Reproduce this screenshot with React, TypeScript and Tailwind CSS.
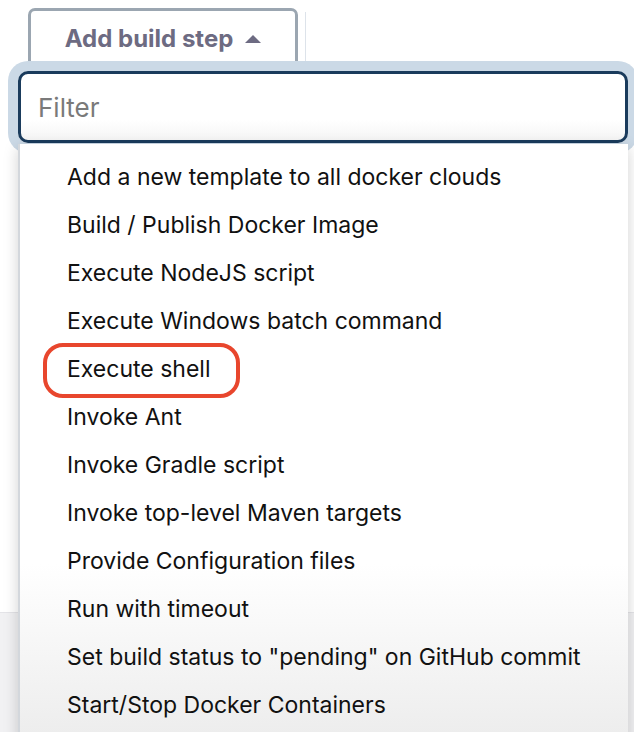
import React from "react";

const items = [
  "Add a new template to all docker clouds",
  "Build / Publish Docker Image",
  "Execute NodeJS script",
  "Execute Windows batch command",
  "Execute shell",
  "Invoke Ant",
  "Invoke Gradle script",
  "Invoke top-level Maven targets",
  "Provide Configuration files",
  "Run with timeout",
  'Set build status to "pending" on GitHub commit',
  "Start/Stop Docker Containers",
];

export default function App() {
  return (
    <div
      className="relative w-[634px] h-[732px] overflow-hidden bg-white"
      style={{ fontFamily: "Inter, 'Noto Sans', sans-serif" }}
    >
      {/* background page */}
      <div className="flex flex-col h-full">
        <div className="h-[612px] bg-white" />
        <div className="flex-1 bg-[#f1f1f3] border-t border-[#e4e4e8]" />
      </div>

      {/* button row */}
      <div className="absolute left-0 top-0 flex items-start">
        <button className="ml-[28px] mt-[8px] w-[270px] h-[61px] border-[3px] border-[#9ba6b1] rounded-[7px] bg-white flex items-center justify-center gap-[12px] text-[24px] font-bold text-[#6d6b82]">
          <span>Add build step</span>
          <svg width="16" height="8" viewBox="0 0 16 8">
            <path d="M0 8 L8 0 L16 8 Z" fill="#6d6b82" />
          </svg>
        </button>
        <div className="ml-[7px] mt-[12px] w-px h-[50px] bg-[#dde3ea]" />
      </div>

      {/* filter + menu overlay */}
      <div className="absolute left-[18px] top-[71px] w-[610px]">
        <div className="h-[72px] rounded-[10px] border-[3px] border-[#1a3b5c] bg-gradient-to-b from-white from-70% to-[#f5f5f5] shadow-[0_0_0_10px_#cbd9e6] flex items-center pl-[17px]">
          <span className="text-[26px] text-[#7a7a7a]">Filter</span>
        </div>
        <div className="mt-px h-[600px] bg-gradient-to-b from-white from-70% to-[#ececec] border-l-2 border-[#d3d7dc] shadow-[0_4px_14px_rgba(0,0,0,0.18)] pt-[9px]">
          {items.map((t) => (
            <div key={t} className="h-[48px] flex items-center pl-[47px] text-[23px] text-[#111]">
              {t}
            </div>
          ))}
        </div>
      </div>

      {/* annotation */}
      <div className="absolute left-[43px] top-[343px] w-[197px] h-[55px] rounded-[20px] border-[4px] border-[#e8462d]" />
    </div>
  );
}
